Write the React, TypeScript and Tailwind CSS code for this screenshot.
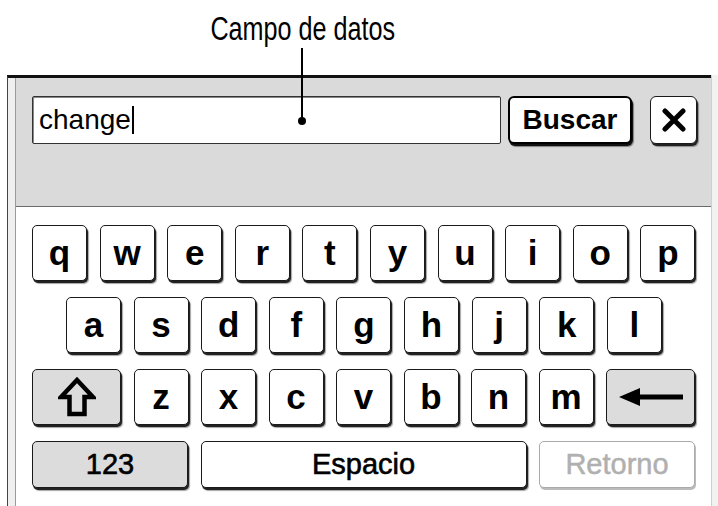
import { ReactNode } from "react";

const sans = "font-['Liberation_Sans',Arial,sans-serif]";

const ROW1 = ["q", "w", "e", "r", "t", "y", "u", "i", "o", "p"];
const ROW2 = ["a", "s", "d", "f", "g", "h", "j", "k", "l"];
const ROW3 = ["z", "x", "c", "v", "b", "n", "m"];

function Key({ children, className = "" }: { children: ReactNode; className?: string }) {
  return (
    <div
      className={`flex h-[56px] items-center justify-center rounded-[5px] border-[1.5px] border-[#1a1a1a] shadow-[1px_2px_0_#222,2px_3px_1px_rgba(0,0,0,0.35)] ${className}`}
    >
      {children}
    </div>
  );
}

function Letter({ ch }: { ch: string }) {
  return (
    <Key className="w-[55px] bg-white">
      <span className="pb-[2px] text-[35px] leading-none font-bold text-black">{ch}</span>
    </Key>
  );
}

function ShiftIcon() {
  return (
    <svg width="38" height="40" viewBox="0 0 38 40" fill="none">
      <path
        d="M19 3 L35 20 L26.5 20 L26.5 37 L11.5 37 L11.5 20 L3 20 Z"
        stroke="#000"
        strokeWidth="4.5"
        strokeLinejoin="miter"
      />
    </svg>
  );
}

function BackIcon() {
  return (
    <svg width="64" height="18" viewBox="0 0 64 18">
      <path d="M0 9 L21 0 L21 18 Z" fill="#000" />
      <rect x="18" y="6.5" width="46" height="5" fill="#000" />
    </svg>
  );
}

export default function App() {
  return (
    <div className={`relative flex h-[506px] w-[718px] flex-col overflow-hidden bg-white ${sans}`}>
      {/* callout */}
      <div className="flex h-[75px] w-[606px] justify-center pt-[9px]">
        <span className="inline-block scale-x-[0.74] text-[34px] leading-[38px] text-black">
          Campo de datos
        </span>
      </div>

      {/* device frame */}
      <div className="ml-[7px] flex flex-1 border-t-[3px] border-l border-t-[#111] border-l-[#444]">
        <div className="w-[7px] bg-[#efefef]" />
        <div className="flex flex-1 flex-col border-l border-[#9a9a9a]">
          {/* search bar panel */}
          <div className="h-[129px] border-b border-[#6a6a6a] bg-[#dadada] pt-[18px] pl-[16px]">
            <div className="flex items-center">
              <div className="flex h-[48px] w-[469px] items-center rounded-[2px] border border-[#333] bg-white pl-[6px] shadow-[inset_1px_1px_0_#888]">
                <span className="text-[28px] leading-none text-black">change</span>
                <span className="ml-[1px] h-[28px] w-[2px] bg-black" />
              </div>
              <div className="ml-[7px] flex h-[48px] w-[124px] items-center justify-center rounded-[6px] border-2 border-black bg-white shadow-[1px_2px_0_#111,2px_3px_1px_rgba(0,0,0,0.4)]">
                <span className="text-[28px] leading-none font-bold text-black">Buscar</span>
              </div>
              <div className="ml-[18px] flex h-[48px] w-[47px] items-center justify-center rounded-[6px] border-[1.5px] border-[#1a1a1a] bg-white shadow-[1px_2px_0_#222,2px_3px_1px_rgba(0,0,0,0.35)]">
                <svg width="24" height="24" viewBox="0 0 24 24">
                  <path d="M3 3 L21 21 M21 3 L3 21" stroke="#000" strokeWidth="5" strokeLinecap="round" />
                </svg>
              </div>
            </div>
          </div>

          {/* keyboard */}
          <div className="flex flex-col gap-[16px] pt-[18px] pl-[16px]">
            <div className="flex gap-[12.6px]">
              {ROW1.map((k) => (
                <Letter key={k} ch={k} />
              ))}
            </div>
            <div className="flex gap-[12.6px] pl-[34px]">
              {ROW2.map((k) => (
                <Letter key={k} ch={k} />
              ))}
            </div>
            <div className="flex gap-[12.5px]">
              <Key className="w-[89px] bg-[#dcdcdc]">
                <ShiftIcon />
              </Key>
              {ROW3.map((k) => (
                <Letter key={k} ch={k} />
              ))}
              <Key className="w-[89px] bg-[#dcdcdc]">
                <BackIcon />
              </Key>
            </div>
            <div className="flex gap-[12.5px]">
              <Key className="!h-[47px] w-[156px] bg-[#dcdcdc]">
                <span className="text-[29px] leading-none text-black [-webkit-text-stroke:0.6px_#000]">123</span>
              </Key>
              <Key className="!h-[47px] w-[326px] bg-white">
                <span className="text-[29px] leading-none text-black [-webkit-text-stroke:0.6px_#000]">Espacio</span>
              </Key>
              <div className="flex h-[47px] w-[156px] items-center justify-center rounded-[5px] border-[1.5px] border-[#aaa] bg-white shadow-[1px_2px_0_#bbb]">
                <span className="text-[29px] leading-none text-[#b0b0b0] [-webkit-text-stroke:0.5px_#b0b0b0]">Retorno</span>
              </div>
            </div>
          </div>
        </div>
        <div className="-mt-[3px] w-[7px] border-l border-[#cfcfcf] bg-[#f2f2f2]" />
      </div>

      {/* callout line and dot */}
      <div className="absolute top-[48px] left-[301px] h-[73px] w-[2px] bg-black" />
      <div className="absolute top-[117px] left-[298px] h-[8px] w-[8px] rounded-full bg-black" />
    </div>
  );
}
